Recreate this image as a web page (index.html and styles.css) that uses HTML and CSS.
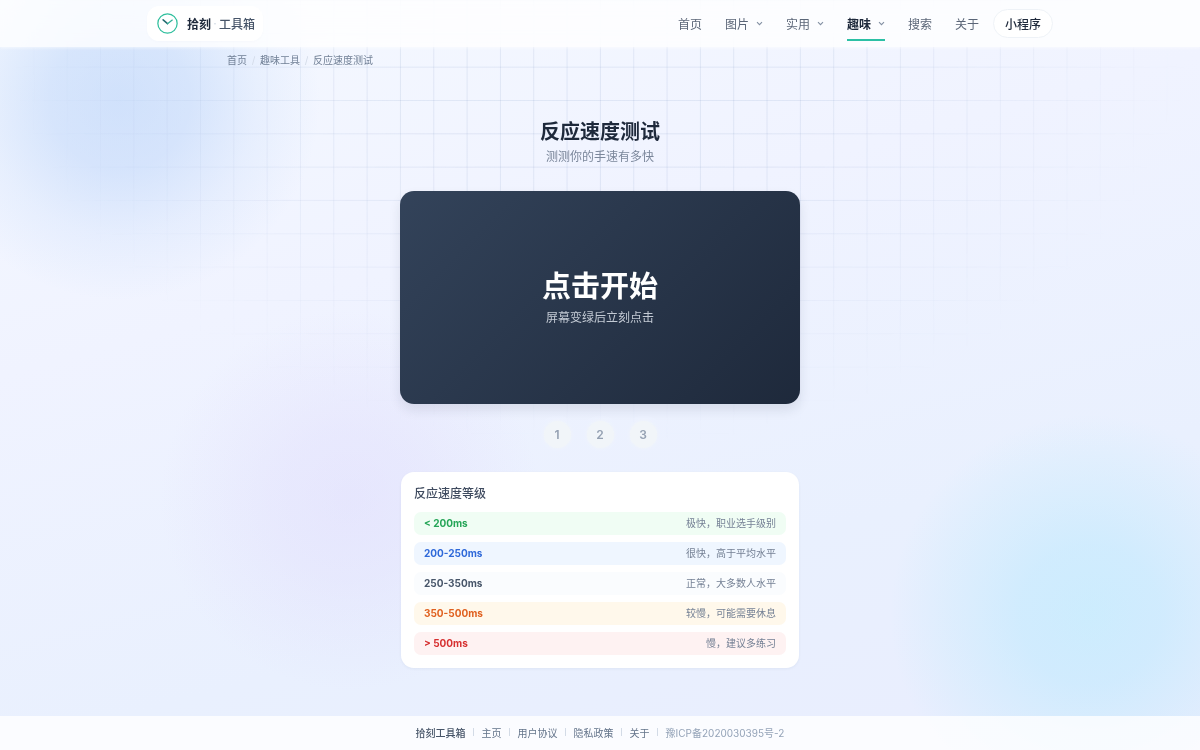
FILE: index.html
```html
<!DOCTYPE html>
<html lang="zh-CN">
<head>
  <meta charset="utf-8">
  <meta name="viewport" content="width=device-width, initial-scale=1">
  <title>反应速度测试 - 拾刻工具箱</title>
  <link rel="stylesheet" href="styles.css">
</head>
<body>

<div class="bg">
  <div class="blob blob-blue"></div>
  <div class="blob blob-purple"></div>
  <div class="blob blob-cyan"></div>
  <div class="grid"></div>
</div>

<header class="header">
  <div class="header-inner">
    <a class="logo" href="#">
      <svg class="logo-icon" viewBox="0 0 22 22" fill="none" stroke-linecap="round">
        <circle cx="11" cy="11" r="10.1" stroke="#2fbf9d" stroke-width="1.3"/>
        <path d="M6.4 7.2L11 11.2" stroke="#256b70" stroke-width="1.6"/>
        <path d="M11 11.2l5-3.8" stroke="#2fae97" stroke-width="1.3"/>
      </svg>
      <span class="logo-name">拾刻</span>
      <span class="logo-dot">·</span>
      <span class="logo-sub">工具箱</span>
    </a>
    <nav class="nav">
      <a href="#">首页</a>
      <a href="#">图片<svg class="arrow" viewBox="0 0 7 7"><path d="M1 2.2l2.5 2.5L6 2.2"/></svg></a>
      <a href="#">实用<svg class="arrow" viewBox="0 0 7 7"><path d="M1 2.2l2.5 2.5L6 2.2"/></svg></a>
      <a href="#" class="active">趣味<svg class="arrow" viewBox="0 0 7 7"><path d="M1 2.2l2.5 2.5L6 2.2"/></svg></a>
      <a href="#">搜索</a>
      <a href="#">关于</a>
      <button type="button" class="mini">小程序</button>
    </nav>
  </div>
</header>

<main class="main">
  <div class="crumbs">
    <a href="#">首页</a><span class="sep">/</span><a href="#">趣味工具</a><span class="sep">/</span><span>反应速度测试</span>
  </div>

  <div class="game">
    <h1>反应速度测试</h1>
    <p class="desc">测测你的手速有多快</p>

    <button type="button" class="panel">
      <span class="panel-title">点击开始</span>
      <span class="panel-tip">屏幕变绿后立刻点击</span>
    </button>

    <div class="rounds">
      <span>1</span>
      <span>2</span>
      <span>3</span>
    </div>

    <section class="card">
      <h2>反应速度等级</h2>
      <table class="levels">
        <tr class="green"><th scope="row">&lt; 200ms</th><td>极快，职业选手级别</td></tr>
        <tr class="blue"><th scope="row">200-250ms</th><td>很快，高于平均水平</td></tr>
        <tr class="gray"><th scope="row">250-350ms</th><td>正常，大多数人水平</td></tr>
        <tr class="orange"><th scope="row">350-500ms</th><td>较慢，可能需要休息</td></tr>
        <tr class="red"><th scope="row">&gt; 500ms</th><td>慢，建议多练习</td></tr>
      </table>
    </section>
  </div>
</main>

<footer class="footer">
  <a href="#" class="strong">拾刻工具箱</a>
  <i></i>
  <a href="#">主页</a>
  <i></i>
  <a href="#">用户协议</a>
  <i></i>
  <a href="#">隐私政策</a>
  <i></i>
  <a href="#">关于</a>
  <i></i>
  <a href="#" class="icp">豫ICP备2020030395号-2</a>
</footer>

</body>
</html>
```
FILE: styles.css
```css
* {
  box-sizing: border-box;
}
body {
  margin: 0;
  min-height: 100vh;
  display: flex;
  flex-direction: column;
  font-family: Inter, "Noto Sans CJK SC", sans-serif;
  font-size: 12px;
  color: #1e293b;
}
a {
  color: inherit;
  text-decoration: none;
}
button {
  font-family: inherit;
  border: 0;
  cursor: pointer;
}

/* background */
.bg {
  position: fixed;
  inset: 0;
  z-index: -1;
  overflow: hidden;
  background: linear-gradient(165deg, #f5f9ff 0%, #f0f3ff 35%, #e9f0fe 70%, #e9edfe 100%);
}
.grid {
  position: absolute;
  inset: 0;
  background-image:
    linear-gradient(to right, rgba(100, 130, 180, 0.13) 1px, transparent 1px),
    linear-gradient(to bottom, rgba(100, 130, 180, 0.13) 1px, transparent 1px);
  background-size: calc(100vw / 36) calc(100vw / 36);
  -webkit-mask-image: radial-gradient(ellipse 50% 60% at 50% 0, #000 40%, transparent 100%);
  mask-image: radial-gradient(ellipse 50% 60% at 50% 0, #000 40%, transparent 100%);
}
.blob {
  position: absolute;
  border-radius: 50%;
}
.blob-blue {
  left: -80px;
  top: -100px;
  width: 400px;
  height: 400px;
  background: radial-gradient(closest-side, rgba(147, 187, 245, 0.36) 0%, rgba(147, 187, 245, 0.3) 35%, rgba(147, 187, 245, 0.12) 68%, transparent 100%);
}
.blob-purple {
  left: 160px;
  top: 310px;
  width: 380px;
  height: 380px;
  background: radial-gradient(closest-side, rgba(216, 204, 250, 0.3) 0%, rgba(216, 204, 250, 0.22) 40%, transparent 100%);
}
.blob-cyan {
  right: -90px;
  bottom: -65px;
  width: 400px;
  height: 400px;
  background: radial-gradient(closest-side, rgba(165, 233, 253, 0.42) 0%, rgba(165, 230, 253, 0.36) 35%, rgba(165, 230, 250, 0.14) 75%, transparent 100%);
}

/* header */
.header {
  background: rgba(255, 255, 255, 0.8);
  backdrop-filter: blur(16px);
  box-shadow: 0 1px 3px rgba(255, 255, 255, 0.6);
}
.header-inner {
  max-width: 906px;
  height: 47px;
  margin: 0 auto;
  display: flex;
  align-items: center;
  justify-content: space-between;
}
.logo {
  display: flex;
  align-items: center;
  height: 35px;
  padding: 0 8px 0 10px;
  border-radius: 12px;
  background: #fff;
  box-shadow: 0 1px 3px rgba(30, 60, 110, 0.02);
}
.logo-icon {
  width: 21px;
  height: 21px;
  margin-right: 9px;
}
.logo-name {
  font-weight: 700;
}
.logo-dot {
  width: 8px;
  text-align: center;
  color: #cbd5e1;
}
.logo-sub {
  font-weight: 500;
  color: #475569;
}
.nav {
  display: flex;
  align-items: center;
  gap: 23px;
  color: #5b6678;
}
.nav a {
  display: flex;
  align-items: center;
  gap: 7px;
  height: 34px;
  border-bottom: 2px solid transparent;
  border-top: 1px solid transparent;
}
.nav .active {
  font-weight: 700;
  color: #1e293b;
  border-bottom-color: #2cc0a5;
}
.arrow {
  width: 7px;
  height: 7px;
  fill: none;
  stroke: #8390a3;
  stroke-width: 1.1;
}
.mini {
  margin-left: -9px;
  height: 29px;
  padding: 0 11px;
  border: 1px solid #eef2f7;
  border-radius: 15px;
  background: #fff;
  font-size: 12px;
  font-weight: 500;
  color: #1e293b;
}

/* content */
.main {
  flex: 1;
  width: 100%;
  max-width: 746px;
  margin: 0 auto;
  padding-bottom: 48px;
}
.crumbs {
  padding-top: 5px;
  font-size: 10px;
  line-height: 16px;
  color: #718096;
}
.crumbs .sep {
  display: inline-block;
  width: 13px;
  text-align: center;
  color: #d3dbe8;
}
.game {
  width: 100%;
  max-width: 400px;
  margin: 0 auto;
  padding-top: 50px;
}
h1 {
  margin: 0;
  font-size: 20px;
  line-height: 28px;
  font-weight: 600;
  text-align: center;
}
.desc {
  margin: 2px 0 25px;
  line-height: 18px;
  text-align: center;
  color: #7b879b;
}
.panel {
  width: 100%;
  height: 213px;
  padding: 0 0 2px;
  display: flex;
  flex-direction: column;
  align-items: center;
  justify-content: center;
  border-radius: 14px;
  background: linear-gradient(135deg, #33435a, #1e293b);
  box-shadow: 0 6px 12px rgba(30, 41, 59, 0.1);
  color: #fff;
}
.panel-title {
  font-size: 29px;
  line-height: 40px;
  font-weight: 600;
}
.panel-tip {
  margin-top: 2px;
  font-size: 12px;
  line-height: 18px;
  color: #c3cad4;
}
.rounds {
  display: flex;
  justify-content: center;
  gap: 16px;
  margin: 17px 0 24px;
}
.rounds span {
  width: 27px;
  height: 27px;
  border-radius: 50%;
  background: #f1f5f9;
  box-shadow: 0 0 4px #f1f5f9;
  text-align: center;
  line-height: 27px;
  font-size: 12px;
  font-weight: 600;
  color: #94a0b2;
}
.card {
  margin: 0 1px;
  padding: 13px;
  border-radius: 13px;
  background: #fff;
  box-shadow: 0 1px 3px rgba(30, 60, 110, 0.06);
}
h2 {
  margin: 0 0 9px;
  font-size: 12px;
  line-height: 18px;
  font-weight: 500;
  color: #3f4b5f;
}
.levels {
  width: 100%;
  margin: -7px 0;
  border-collapse: separate;
  border-spacing: 0 7px;
  font-size: 10px;
  line-height: 15px;
}
.levels th {
  padding: 4px 10px;
  border-radius: 7px 0 0 7px;
  text-align: left;
  font-weight: 700;
}
.levels td {
  padding: 4px 10px;
  border-radius: 0 7px 7px 0;
  text-align: right;
  color: #758195;
}
.green th, .green td { background: #f0fdf4; }
.blue th, .blue td { background: #eff6ff; }
.gray th, .gray td { background: #fafcfe; }
.orange th, .orange td { background: #fff8eb; }
.red th, .red td { background: #fef2f2; }
.green th { color: #25a557; }
.blue th { color: #2f69d9; }
.gray th { color: #475569; }
.orange th { color: #e0601f; }
.red th { color: #d63030; }

/* footer */
.footer {
  display: flex;
  align-items: center;
  justify-content: center;
  gap: 7px;
  height: 34px;
  padding-bottom: 2px;
  background: rgba(255, 255, 255, 0.8);
  font-size: 10px;
  color: #64748b;
}
.footer i {
  width: 2px;
  height: 8px;
  border-left: 1px solid #d3dbe6;
}
.footer .strong {
  font-weight: 500;
  color: #475569;
}
.footer .icp {
  color: #94a3b8;
}
```
